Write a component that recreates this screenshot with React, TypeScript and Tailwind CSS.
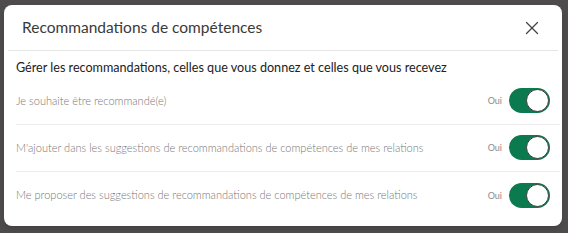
import { X } from "lucide-react";

const rows = [
  "Je souhaite être recommandé(e)",
  "M'ajouter dans les suggestions de recommandations de compétences de mes relations",
  "Me proposer des suggestions de recommandations de compétences de mes relations",
];

function Toggle() {
  return (
    <div className="mr-[10px] flex items-center gap-[7px]">
      <span className="text-[9px] text-[#8a8a8a]">Oui</span>
      <div className="flex h-[25px] w-[41px] items-center justify-end rounded-full bg-[#0b7a4f] p-[1px]">
        <div className="h-[23px] w-[23px] rounded-full border border-[#3a3a3a] bg-white" />
      </div>
    </div>
  );
}

export default function App() {
  return (
    <div
      className="h-[233px] w-[568px] bg-[#4d4b4b] pl-[4px] pt-[5px]"
      style={{ fontFamily: 'Lato, "Open Sans", sans-serif' }}
    >
      <div className="flex h-[221px] w-[558px] flex-col rounded-[8px] bg-white shadow-md">
        <div className="mx-[4px] flex h-[46px] items-center justify-between border-b border-[#e6e6e6] pl-[14px] pr-[15px]">
          <h1 className="text-[15.5px] text-[#3a3a3a]">Recommandations de compétences</h1>
          <X className="h-[22px] w-[22px] text-[#444]" strokeWidth={1.4} />
        </div>
        <div className="flex flex-col pl-[12px] pr-[2px]">
          <p className="pt-[8px] text-[12.6px] text-[#222]">
            Gérer les recommandations, celles que vous donnez et celles que vous recevez
          </p>
          {rows.map((r, i) => (
            <div
              key={r}
              className={`flex h-[47px] items-center justify-between ${
                i < rows.length - 1 ? "border-b border-[#ececec]" : ""
              }`}
            >
              <span className="text-[11px] font-light text-[#777]">{r}</span>
              <Toggle />
            </div>
          ))}
        </div>
      </div>
    </div>
  );
}
